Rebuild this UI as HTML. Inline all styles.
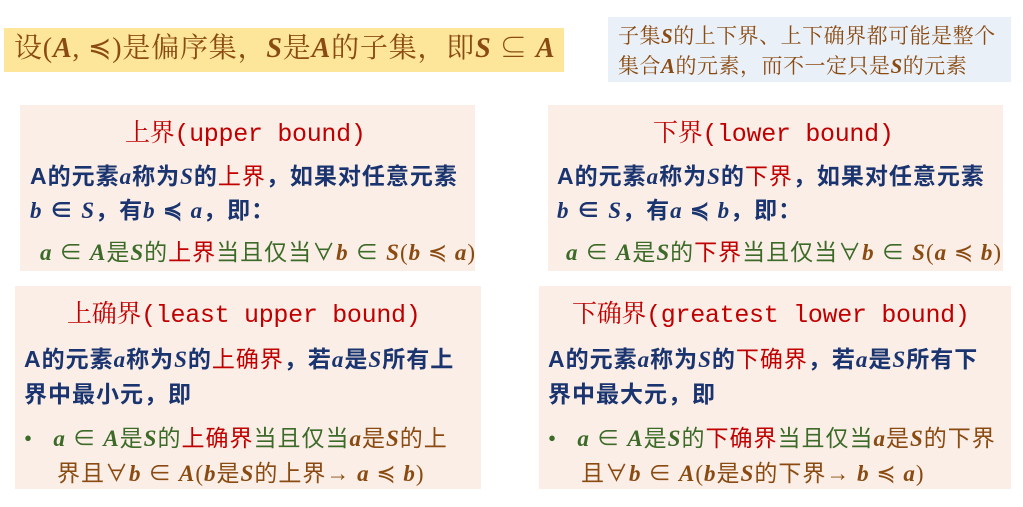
<!DOCTYPE html>
<html><head><meta charset="utf-8"><style>
body{margin:0;width:1023px;height:507px;background:#fff;position:relative;overflow:hidden;font-family:"Liberation Serif","Noto Serif CJK SC",serif}
.a{position:absolute;white-space:nowrap}
.box{position:absolute;background:#fbeee6}
.t{color:#c00000;font-size:25px;font-family:"Liberation Mono","Noto Serif CJK SC",monospace;letter-spacing:-0.3px}
.b{color:#1a3470;font-weight:bold;font-size:23px;letter-spacing:1px;font-family:"Liberation Sans","Noto Sans CJK SC",sans-serif}
.b i{font-family:"Liberation Serif",serif}
.r{color:#c00000;font-weight:normal}
.g{color:#3c6a28;font-size:23px;letter-spacing:1px;font-family:"Liberation Serif","Noto Sans CJK SC",serif}
.o{color:#8a4b12}
i{font-style:italic;font-weight:bold}
</style></head><body>
<div class="a" style="left:4px;top:28px;width:560px;height:44px;background:#fde59a"></div>
<div class="a o" style="left:14px;top:30px;font-size:28px;letter-spacing:0.8px;line-height:38px;font-family:'Liberation Serif','Noto Serif CJK SC',serif">设(<i>A</i>, ≼)是偏序集，<i>S</i>是<i>A</i>的子集，即<i>S</i> ⊆ <i>A</i></div>
<div class="a" style="left:608px;top:17px;width:403px;height:65px;background:#eaf0f8"></div>
<div class="a o" style="left:618px;top:21px;font-size:21px;letter-spacing:0.5px;line-height:30px;font-family:'Liberation Serif','Noto Serif CJK SC',serif">子集<i>S</i>的上下界、上下确界都可能是整个<br>集合<i>A</i>的元素，而不一定只是<i>S</i>的元素</div>

<div class="box" style="left:20px;top:105px;width:455px;height:166px"></div>
<div class="a t" style="left:125px;top:113px">上界(upper bound)</div>
<div class="a b" style="left:30px;top:157px">A的元素<i>a</i>称为<i>S</i>的<span class="r">上界</span>，如果对任意元素</div>
<div class="a b" style="left:30px;top:191px"><i>b</i> ∈ <i>S</i>，有<i>b</i> ≼ <i>a</i>，即：</div>
<div class="a g" style="left:40px;top:233px"><i>a</i> ∈ <i>A</i>是<i>S</i>的<span class="r">上界</span>当且仅当∀<i class="o">b</i> ∈ <i class="o">S</i><span class="o">(<i>b</i> ≼ <i>a</i>)</span></div>

<div class="box" style="left:548px;top:105px;width:455px;height:166px"></div>
<div class="a t" style="left:653px;top:113px">下界(lower bound)</div>
<div class="a b" style="left:557px;top:157px">A的元素<i>a</i>称为<i>S</i>的<span class="r">下界</span>，如果对任意元素</div>
<div class="a b" style="left:557px;top:191px"><i>b</i> ∈ <i>S</i>，有<i>a</i> ≼ <i>b</i>，即：</div>
<div class="a g" style="left:566px;top:233px"><i>a</i> ∈ <i>A</i>是<i>S</i>的<span class="r">下界</span>当且仅当∀<i class="o">b</i> ∈ <i class="o">S</i><span class="o">(<i>a</i> ≼ <i>b</i>)</span></div>

<div class="box" style="left:15px;top:286px;width:466px;height:203px"></div>
<div class="a t" style="left:67px;top:294px">上确界(least upper bound)</div>
<div class="a b" style="left:24px;top:340px">A的元素<i>a</i>称为<i>S</i>的<span class="r">上确界</span>，若<i>a</i>是<i>S</i>所有上</div>
<div class="a b" style="left:24px;top:375px">界中最小元，即</div>
<div class="a g" style="left:24px;top:419px">•&nbsp;&nbsp;&nbsp;<i>a</i> ∈ <i>A</i>是<i>S</i>的<span class="r">上确界</span>当且仅当<span class="o"><i>a</i>是<i>S</i>的上</span></div>
<div class="a g o" style="left:57px;top:454px">界且∀<i>b</i> ∈ <i>A</i>(<i>b</i>是<i>S</i>的上界→ <i>a</i> ≼ <i>b</i>)</div>

<div class="box" style="left:539px;top:286px;width:472px;height:203px"></div>
<div class="a t" style="left:572px;top:294px">下确界(greatest lower bound)</div>
<div class="a b" style="left:548px;top:340px">A的元素<i>a</i>称为<i>S</i>的<span class="r">下确界</span>，若<i>a</i>是<i>S</i>所有下</div>
<div class="a b" style="left:548px;top:375px">界中最大元，即</div>
<div class="a g" style="left:548px;top:419px">•&nbsp;&nbsp;&nbsp;<i>a</i> ∈ <i>A</i>是<i>S</i>的<span class="r">下确界</span>当且仅当<span class="o"><i>a</i>是<i>S</i>的下界</span></div>
<div class="a g o" style="left:581px;top:454px">且∀<i>b</i> ∈ <i>A</i>(<i>b</i>是<i>S</i>的下界→ <i>b</i> ≼ <i>a</i>)</div>
</body></html>
